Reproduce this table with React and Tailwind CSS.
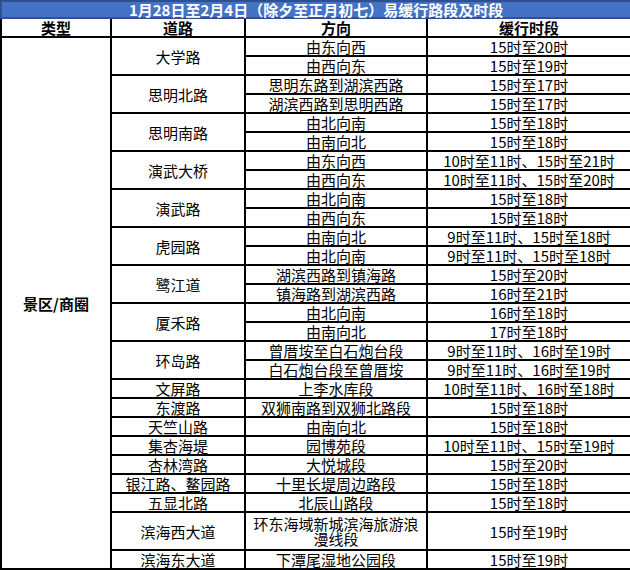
const groups = [
  { road: "大学路", items: [["由东向西", "15时至20时"], ["由西向东", "15时至19时"]] },
  { road: "思明北路", items: [["思明东路到湖滨西路", "15时至17时"], ["湖滨西路到思明西路", "15时至17时"]] },
  { road: "思明南路", items: [["由北向南", "15时至18时"], ["由南向北", "15时至18时"]] },
  { road: "演武大桥", items: [["由东向西", "10时至11时、15时至21时"], ["由西向东", "10时至11时、15时至20时"]] },
  { road: "演武路", items: [["由北向南", "15时至18时"], ["由西向东", "15时至18时"]] },
  { road: "虎园路", items: [["由南向北", "9时至11时、15时至18时"], ["由北向南", "9时至11时、15时至18时"]] },
  { road: "鹭江道", items: [["湖滨西路到镇海路", "15时至20时"], ["镇海路到湖滨西路", "16时至21时"]] },
  { road: "厦禾路", items: [["由北向南", "16时至18时"], ["由南向北", "17时至18时"]] },
  { road: "环岛路", items: [["曾厝垵至白石炮台段", "9时至11时、16时至19时"], ["白石炮台段至曾厝垵", "9时至11时、16时至19时"]] },
  { road: "文屏路", items: [["上李水库段", "10时至11时、16时至18时"]] },
  { road: "东渡路", items: [["双狮南路到双狮北路段", "15时至18时"]] },
  { road: "天竺山路", items: [["由南向北", "15时至18时"]] },
  { road: "集杏海堤", items: [["园博苑段", "10时至11时、15时至19时"]] },
  { road: "杏林湾路", items: [["大悦城段", "15时至20时"]] },
  { road: "银江路、鳌园路", items: [["十里长堤周边路段", "15时至18时"]] },
  { road: "五显北路", items: [["北辰山路段", "15时至18时"]] },
  { road: "滨海西大道", tall: true, items: [["环东海域新城滨海旅游浪\n漫线段", "15时至19时"]] },
  { road: "滨海东大道", items: [["下潭尾湿地公园段", "15时至19时"]] },
];

const cell = "border-2 border-black p-0 text-center align-middle leading-[15px]";

export default function App() {
  const total = groups.reduce((n, g) => n + g.items.length, 0);
  let first = true;
  return (
    <div className="w-[630px] h-[570px] bg-white overflow-hidden text-black text-[15px] font-['Noto_Sans_CJK_SC','Noto_Sans',sans-serif]">
      <table className="border-collapse table-fixed w-[630px]">
        <colgroup>
          <col className="w-[110px]" />
          <col className="w-[134px]" />
          <col className="w-[182px]" />
          <col className="w-[204px]" />
        </colgroup>
        <tbody>
          <tr className="h-[17px]">
            <td colSpan={4} className="border-2 border-[#2f4f8f] bg-[#4472c4] text-white font-bold text-center leading-[15px] p-0">
              1月28日至2月4日（除夕至正月初七）易缓行路段及时段
            </td>
          </tr>
          <tr className="h-[19px]">
            <td className={cell + " font-bold"}>类型</td>
            <td className={cell + " font-bold"}>道路</td>
            <td className={cell + " font-bold"}>方向</td>
            <td className={cell + " font-bold"}>缓行时段</td>
          </tr>
          {groups.map((g) =>
            g.items.map(([dir, time], i) => {
              const showType = first;
              first = false;
              return (
                <tr key={g.road + i} className={g.tall ? "h-[38px]" : "h-[19px]"}>
                  {showType && (
                    <td rowSpan={total} className={cell + " font-bold"}>
                      景区/商圈
                    </td>
                  )}
                  {i === 0 && (
                    <td rowSpan={g.items.length} className={cell}>
                      {g.road}
                    </td>
                  )}
                  <td className={cell + " whitespace-pre-line"}>{dir}</td>
                  <td className={cell}>{time}</td>
                </tr>
              );
            })
          )}
        </tbody>
      </table>
    </div>
  );
}
